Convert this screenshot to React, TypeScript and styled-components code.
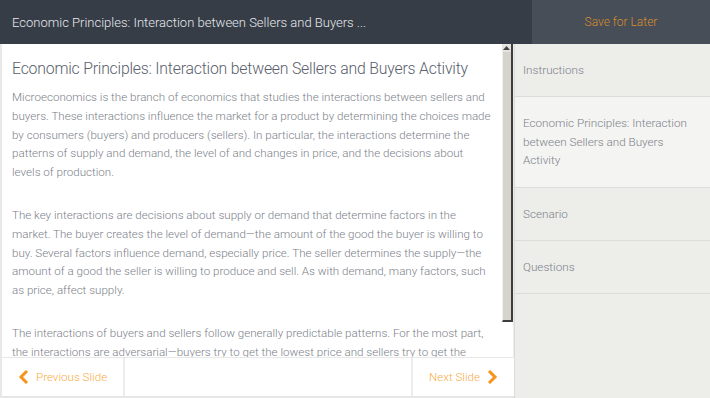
import * as React from "react";
import styled, { createGlobalStyle } from "styled-components";

const GlobalStyle = createGlobalStyle`
  html, body {
    margin: 0;
    padding: 0;
    height: 100%;
    overflow: hidden;
  }
  body {
    font-family: Roboto, "Liberation Sans", sans-serif;
    background: #ffffff;
  }
  #root {
    height: 100%;
  }
`;

const orange = "#f7941d";

const Page = styled.div`
  display: grid;
  grid-template-rows: 44px 1fr;
  height: 398px;
  width: 710px;
`;

const Header = styled.header`
  display: flex;
  background: #363d47;
`;

const HeaderTitle = styled.div`
  flex: 1;
  display: flex;
  align-items: center;
  padding-left: 12px;
  font-size: 13px;
  font-weight: 300;
  color: #e6e9ed;
`;

const SaveButton = styled.button`
  width: 178px;
  border: 0;
  background: #474e58;
  color: #d78c2c;
  font-family: inherit;
  font-size: 12px;
  font-weight: 300;
  cursor: pointer;
`;

const Body = styled.div`
  display: grid;
  grid-template-columns: 514px 1fr;
  min-height: 0;
`;

const Main = styled.div`
  display: grid;
  grid-template-rows: 1fr 41px;
  min-height: 0;
  min-width: 0;
  border-left: 2px solid #e8e8e8;
`;

const ContentRow = styled.div`
  display: flex;
  min-height: 0;
  min-width: 0;
`;

const Scroller = styled.div`
  flex: 1;
  min-width: 0;
  min-height: 0;
  overflow: hidden;
  padding: 12px 10px 0 10px;
`;

const ScrollTrack = styled.div`
  flex: 0 0 11px;
  display: flex;
  flex-direction: column;
  background: #ffffff;
  border-right: 1px solid #ececec;
`;

const ScrollUp = styled.div`
  height: 8px;
  background: #e6e4de;
  border-right: 2px solid #3d3d3d;
  display: flex;
  justify-content: center;
  align-items: center;
`;

const ScrollThumb = styled.div`
  height: 270px;
  background: #d6d3cc;
  border-left: 1px solid #f0f0f0;
  border-right: 2px solid #3d3d3d;
  border-bottom: 2px solid #3d3d3d;
  box-sizing: border-box;
`;

const Title = styled.h1`
  margin: 0 0 6px;
  font-size: 15.8px;
  letter-spacing: -0.2px;
  font-weight: 300;
  color: #59606c;
  line-height: 26px;
  white-space: nowrap;
`;

const Para = styled.p`
  margin: 0 0 24px;
  font-size: 11.6px;
  line-height: 18.8px;
  font-weight: 300;
  color: #7c818a;
`;

const Footer = styled.footer`
  display: flex;
  justify-content: space-between;
  background: #ffffff;
  border-top: 1px solid #e8e8e8;
  border-bottom: 2px solid #e6e6e6;
`;

const NavButton = styled.button<{ $side: "left" | "right" }>`
  display: flex;
  align-items: center;
  flex-shrink: 0;
  white-space: nowrap;
  gap: 7px;
  border: 0;
  ${(p) => (p.$side === "left" ? "border-right" : "border-left")}: 2px solid #ececec;
  background: #ffffff;
  color: #f9ac45;
  font-family: inherit;
  font-size: 11.6px;
  font-weight: 300;
  padding: 0 16px 0 16px;
  cursor: pointer;
`;

const Sidebar = styled.nav`
  background: #ededea;
  display: flex;
  flex-direction: column;
  border-left: 1px solid #dcdcd8;
`;

const NavItem = styled.div<{ $active?: boolean }>`
  min-height: 53px;
  box-sizing: border-box;
  display: flex;
  align-items: center;
  padding: ${(p) => (p.$active ? "17px 12px 17px 8px" : "0 12px 0 8px")};
  background: ${(p) => (p.$active ? "#f4f4f2" : "transparent")};
  border-bottom: 1px solid #dcdcd8;
  font-size: 11.7px;
  font-weight: 300;
  line-height: 18.7px;
  color: #7c818a;
`;

function Chevron({ dir }: { dir: "left" | "right" }): JSX.Element {
  return (
    <svg width="11" height="14" viewBox="0 0 11 14">
      <path
        d={dir === "left" ? "M9 1 L3 7 L9 13" : "M2 1 L8 7 L2 13"}
        fill="none"
        stroke={orange}
        strokeWidth="3"
      />
    </svg>
  );
}

const paragraphs = [
  "Microeconomics is the branch of economics that studies the interactions between sellers and buyers. These interactions influence the market for a product by determining the choices made by consumers (buyers) and producers (sellers). In particular, the interactions determine the patterns of supply and demand, the level of and changes in price, and the decisions about levels of production.",
  "The key interactions are decisions about supply or demand that determine factors in the market. The buyer creates the level of demand\u2014the amount of the good the buyer is willing to buy. Several factors influence demand, especially price. The seller determines the supply\u2014the amount of a good the seller is willing to produce and sell. As with demand, many factors, such as price, affect supply.",
  "The interactions of buyers and sellers follow generally predictable patterns. For the most part, the interactions are adversarial\u2014buyers try to get the lowest price and sellers try to get the highest price.",
];

const sections = [
  "Instructions",
  "Economic Principles: Interaction between Sellers and Buyers Activity",
  "Scenario",
  "Questions",
];

export default function App(): JSX.Element {
  return (
    <>
      <GlobalStyle />
      <Page>
        <Header>
          <HeaderTitle>Economic Principles: Interaction between Sellers and Buyers ...</HeaderTitle>
          <SaveButton>Save for Later</SaveButton>
        </Header>
        <Body>
          <Main>
            <ContentRow>
              <Scroller>
                <Title>Economic Principles: Interaction between Sellers and Buyers Activity</Title>
                {paragraphs.map((t, i) => (
                  <Para key={i}>{t}</Para>
                ))}
              </Scroller>
              <ScrollTrack>
                <ScrollUp>
                  <svg width="7" height="4" viewBox="0 0 7 4">
                    <path d="M0 4 L3.5 0 L7 4 Z" fill="#444" />
                  </svg>
                </ScrollUp>
                <ScrollThumb />
              </ScrollTrack>
            </ContentRow>
            <Footer>
              <NavButton $side="left">
                <Chevron dir="left" />
                Previous Slide
              </NavButton>
              <NavButton $side="right">
                Next Slide
                <Chevron dir="right" />
              </NavButton>
            </Footer>
          </Main>
          <Sidebar>
            {sections.map((s, i) => (
              <NavItem key={s} $active={i === 1}>
                {s}
              </NavItem>
            ))}
          </Sidebar>
        </Body>
      </Page>
    </>
  );
}
